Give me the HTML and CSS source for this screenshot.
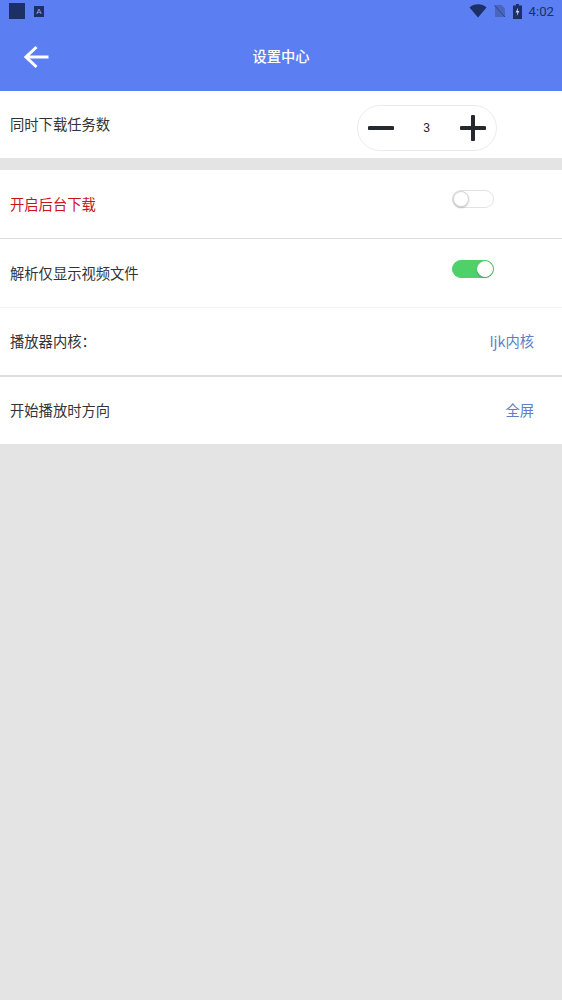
FILE: index.html
```html
<html>
	<head>
		<meta charset="utf-8">
		<title>设置中心</title>
		<link rel="stylesheet" href="styles.css">
	</head>
	<body>
		<div class="header">
			<div class="status-bar">
				<div class="status-left">
					<div class="status-square"></div>
					<div class="status-a">A</div>
				</div>
				<div class="status-right">
					<svg class="wifi-icon" width="18" height="14" viewBox="0 0 18 14">
						<path d="M0.5 3.5 C5 -0.8 13 -0.8 17.5 3.5 L9 13.5 Z" fill="#1c2f66"/>
					</svg>
					<svg class="sim-icon" width="12" height="14" viewBox="0 0 12 14">
						<path d="M1 1 H7.5 L11 4.5 V13 H1 Z" fill="#4a66bc"/>
						<path d="M0.5 1.5 L11 13" stroke="#2f4688" stroke-width="1"/>
					</svg>
					<svg class="battery-icon" width="9" height="15" viewBox="0 0 9 15">
						<path d="M3 0 H6 V1.5 H9 V15 H0 V1.5 H3 Z" fill="#1c2f66"/>
						<path d="M5.2 3.5 L2.6 8.5 H4.3 L3.8 12 L6.4 7 H4.7 Z" fill="#c6d2f4"/>
					</svg>
					<span class="status-time">4:02</span>
				</div>
			</div>
			<div class="title-bar">
				<svg class="back-icon" width="26" height="24" viewBox="0 0 26 24">
					<path d="M2 12 H24.5 M12.5 2 L2 12 L12.5 22" fill="none" stroke="#ffffff" stroke-width="3"/>
				</svg>
				<span class="title-text">设置中心</span>
			</div>
		</div>

		<div class="row row-first">
			<span class="row-label">同时下载任务数</span>
			<div class="stepper">
				<svg width="26" height="26" viewBox="0 0 26 26">
					<path d="M1.5 13 H24.5" stroke="#25292e" stroke-width="4" stroke-linecap="round"/>
				</svg>
				<span class="stepper-value">3</span>
				<svg width="26" height="26" viewBox="0 0 26 26">
					<path d="M1.5 13 H24.5 M13 1.5 V24.5" stroke="#25292e" stroke-width="4" stroke-linecap="round"/>
				</svg>
			</div>
		</div>

		<div class="row row-line">
			<span class="row-label label-red">开启后台下载</span>
			<div class="switch"><div class="switch-knob"></div></div>
		</div>
		<div class="row row-faint">
			<span class="row-label">解析仅显示视频文件</span>
			<div class="switch switch-on"><div class="switch-knob"></div></div>
		</div>
		<div class="row row-thick">
			<span class="row-label">播放器内核：</span>
			<span class="row-value">Ijk内核</span>
		</div>
		<div class="row">
			<span class="row-label">开始播放时方向</span>
			<span class="row-value">全屏</span>
		</div>
	</body>
</html>
```

FILE: styles.css
```css
body {
	margin: 0;
	height: 1000px;
	overflow: hidden;
	background-color: #e4e4e4;
	font-family: "Noto Sans CJK SC", "Liberation Sans", sans-serif;
}

.header {
	height: 91px;
	background-color: #5b7ef3;
}

.status-bar {
	height: 22px;
	display: flex;
	justify-content: space-between;
	align-items: center;
	padding: 0 8px 0 9px;
}

.status-left {
	display: flex;
	align-items: center;
	gap: 9px;
}

.status-square {
	width: 16px;
	height: 16px;
	background-color: #1c2f66;
}

.status-a {
	width: 10px;
	height: 11px;
	background-color: #1c2f66;
	color: #9db0e8;
	font-family: "Liberation Sans", sans-serif;
	font-size: 8px;
	line-height: 11px;
	text-align: center;
}

.status-right {
	display: flex;
	align-items: center;
	gap: 7px;
}

.status-time {
	font-family: Roboto, sans-serif;
	font-size: 13.2px;
	color: #1c2f66;
}

.title-bar {
	height: 69px;
	position: relative;
	display: flex;
	align-items: center;
	justify-content: center;
}

.back-icon {
	position: absolute;
	left: 24px;
	top: 23px;
}

.title-text {
	color: #ffffff;
	font-size: 14.3px;
	font-weight: 500;
	margin-bottom: 3px;
}

.row {
	height: 67px;
	display: flex;
	align-items: center;
	justify-content: space-between;
	padding: 0 28px 0 10px;
	background-color: #ffffff;
	color: #333333;
	font-size: 14.3px;
}

.row-label, .row-value {
	margin-bottom: 2px;
}

.row-first {
	margin-bottom: 12px;
}

.row-line {
	height: 68px;
	border-bottom: 1px solid #dddddd;
}

.row-faint {
	height: 68px;
	border-bottom: 1px solid #f3f3f3;
}

.row-thick {
	border-bottom: 2px solid #dedede;
}

.label-red {
	color: #c8141c;
}

.row-value {
	color: #5f7fc4;
}

.stepper {
	width: 140px;
	height: 46px;
	margin: 7px 37px 0 0;
	box-sizing: border-box;
	border: 1px solid #ececec;
	border-radius: 23px;
	display: flex;
	align-items: center;
	justify-content: space-between;
	padding: 0 10px;
}

.stepper-value {
	font-family: "Liberation Sans", sans-serif;
	font-size: 12px;
	color: #222222;
	margin-right: 1px;
}

.switch {
	width: 42px;
	height: 18px;
	margin: 0 40px 10px 0;
	box-sizing: border-box;
	border: 1px solid #e2e2e2;
	border-radius: 9px;
	background-color: #ffffff;
	display: flex;
	align-items: center;
}

.switch-knob {
	width: 16px;
	height: 16px;
	box-sizing: border-box;
	border: 1px solid #d4d4d4;
	border-radius: 50%;
	background-color: #ffffff;
	box-shadow: 0 1px 2px rgba(0,0,0,0.2);
}

.switch-on {
	margin-bottom: 8px;
	background-color: #4fd069;
	border-color: #4fd069;
	justify-content: flex-end;
}

.switch-on .switch-knob {
	border-color: #ffffff;
}
```
